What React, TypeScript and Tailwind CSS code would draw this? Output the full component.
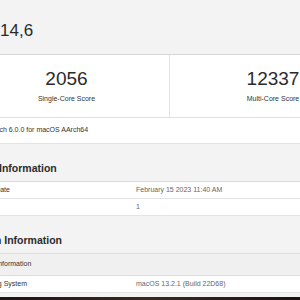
export default function App() {
  const resultRows = [
    { label: 'Upload Date', value: 'February 15 2023 11:40 AM' },
    { label: 'Views', value: '1' },
  ]

  return (
    <div className="w-[300px] h-[300px] overflow-hidden bg-[#f3f3f3] text-[#333] font-['Liberation_Sans',Arial,sans-serif]">
      <div className="ml-[-36px] w-[412px]">
        {/* page title */}
        <div className="h-[54px] pt-[21px] pl-[4px] text-[17px] leading-[20px] text-[#2b2b2b]">Mac14,6</div>

        {/* scores */}
        <div className="bg-white border-t border-[#d6d6d6]">
          <div className="grid grid-cols-2 h-[62px]">
            <div className="flex flex-col items-center pt-[13px] border-r border-[#e2e2e2]">
              <div className="text-[19px] leading-[22px] text-[#2b2b2b]">2056</div>
              <div className="mt-[4px] text-[7px] leading-[9px]">Single-Core Score</div>
            </div>
            <div className="flex flex-col items-center pt-[13px]">
              <div className="text-[19px] leading-[22px] text-[#2b2b2b]">12337</div>
              <div className="mt-[4px] text-[7px] leading-[9px]">Multi-Core Score</div>
            </div>
          </div>
          <div className="h-[27px] flex items-center pl-[7px] border-t border-b border-[#e2e2e2] text-[7px]">
            Geekbench 6.0.0 for macOS AArch64
          </div>
        </div>

        {/* result information */}
        <h2 className="pt-[18px] pb-[6px] text-[10.5px] leading-[13px] font-bold text-[#2b2b2b]">Result Information</h2>
        <div className="bg-white border-t border-[#dcdcdc]">
          {resultRows.map((r) => (
            <div key={r.label} className="grid grid-cols-[165px_1fr] h-[17px] items-center pl-[7px] border-b border-[#e4e4e4] text-[7px]">
              <span>{r.label}</span>
              <span className="text-[#666]">{r.value}</span>
            </div>
          ))}
        </div>

        {/* system information */}
        <h2 className="pt-[18px] pb-[6px] text-[10.5px] leading-[13px] font-bold text-[#2b2b2b]">System Information</h2>
        <div className="border-t border-[#dcdcdc]">
          <div className="h-[22px] flex items-center pl-[7px] bg-[#f0f0f0] border-b border-[#dedede] text-[7px]">
            System Information
          </div>
          <div className="grid grid-cols-[165px_1fr] h-[17px] items-center pl-[7px] bg-white border-b border-[#e4e4e4] text-[7px]">
            <span>Operating System</span>
            <span className="text-[#666]">macOS 13.2.1 (Build 22D68)</span>
          </div>
        </div>
      </div>
      <div className="mt-[4px] h-[10px] bg-gradient-to-r from-[#1e1414] via-[#3a2820] to-[#1c1212]" />
    </div>
  )
}
